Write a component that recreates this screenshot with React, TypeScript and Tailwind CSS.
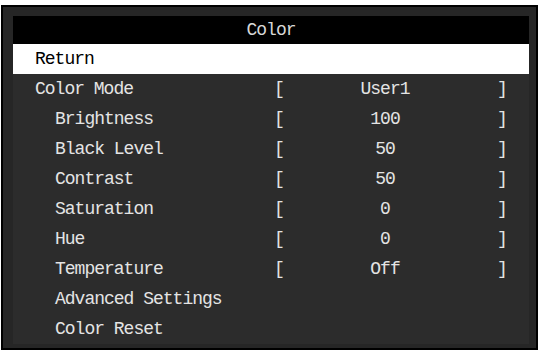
const rows = [
  { label: "Color Mode", value: "User1", indent: false },
  { label: "Brightness", value: "100", indent: true },
  { label: "Black Level", value: "50", indent: true },
  { label: "Contrast", value: "50", indent: true },
  { label: "Saturation", value: "0", indent: true },
  { label: "Hue", value: "0", indent: true },
  { label: "Temperature", value: "Off", indent: true },
  { label: "Advanced Settings", indent: true },
  { label: "Color Reset", indent: true },
];

const Row = ({ label, value, indent }: { label: string; value?: string; indent?: boolean }) => (
  <div className="flex items-center h-[30px] text-[#e4e4e4]">
    <div className={`w-[261px] ${indent ? "pl-[42px]" : "pl-[22px]"}`}>{label}</div>
    {value !== undefined && (
      <>
        <div className="w-[10px]">[</div>
        <div className="w-[202px] text-center">{value}</div>
        <div className="ml-[11px]">]</div>
      </>
    )}
  </div>
);

export default function App() {
  return (
    <div
      className="w-[540px] h-[354px] bg-white pt-[5px] pl-[1px]"
      style={{ fontFamily: '"Liberation Mono", "DejaVu Sans Mono", monospace' }}
    >
      <div className="w-[537px] h-[345px] border-2 border-black bg-[#262626] pt-[9px] pl-[10px] pr-[7px] pb-[4px]">
        <div className="flex flex-col h-full bg-[#2c2c2c] text-[18px] tracking-[-1px] leading-none">
          <div className="h-[28px] bg-black flex items-center justify-center text-[#d8d8d8]">Color</div>
          <div className="h-[30px] bg-white flex items-center pl-[22px] text-black">Return</div>
          {rows.map((r) => (
            <Row key={r.label} {...r} />
          ))}
        </div>
      </div>
    </div>
  );
}
